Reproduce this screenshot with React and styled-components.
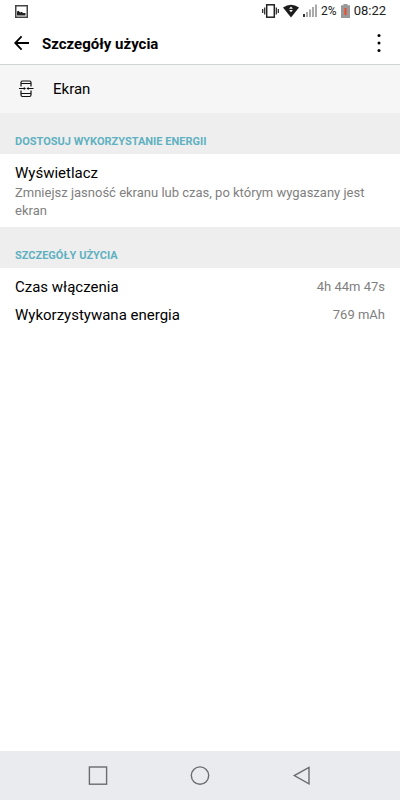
import React from "react";
import styled, { createGlobalStyle } from "styled-components";

const GlobalStyle = createGlobalStyle`
  * {
    box-sizing: border-box;
  }
  body {
    margin: 0;
    background: #fff;
    color: #000;
    font-family: Roboto, "Liberation Sans", sans-serif;
  }
`;

const Screen = styled.div`
  display: flex;
  flex-direction: column;
  min-height: 100vh;
`;

const StatusBar = styled.div`
  display: flex;
  align-items: center;
  justify-content: space-between;
  height: 22px;
  padding: 0 14px 0 15px;
`;

const StatusGroup = styled.div`
  display: flex;
  align-items: center;
  gap: 4px;
  color: #222;
`;

const StatusText = styled.span`
  font-size: ${(props) => (props.$small ? "12px" : "13px")};
  line-height: 24px;
`;

const Header = styled.header`
  display: flex;
  align-items: center;
  height: 43px;
  padding: 0 15px 0 14px;
  border-bottom: 1px solid #cfd4d4;
`;

const Title = styled.h1`
  flex: 1;
  margin: 0 0 0 12px;
  padding-top: 2px;
  font-size: 15px;
  font-weight: 700;
  line-height: 21px;
`;

const IconButton = styled.button`
  display: flex;
  align-items: center;
  justify-content: center;
  padding: 0;
  border: 0;
  background: none;
`;

const AppRow = styled.div`
  display: flex;
  align-items: center;
  gap: 19px;
  height: 48px;
  padding: 0 18px;
  background: #f6f6f6;
  font-size: 15px;
`;

const SectionTitle = styled.h2`
  margin: 0;
  padding: 21px 15px 4px;
  background: #eee;
  color: #5fb1c1;
  font-size: 11px;
  font-weight: 700;
  line-height: 16px;
  text-transform: uppercase;
`;

const Setting = styled.a`
  display: block;
  padding: 9px 15px 7px;
  color: inherit;
  text-decoration: none;
`;

const Label = styled.div`
  font-size: 15px;
  line-height: 21px;
`;

const Summary = styled.div`
  color: #808080;
  font-size: 13px;
  line-height: 18px;
`;

const Details = styled.dl`
  margin: 0;
  padding: 5px 15px;
`;

const Detail = styled.div`
  display: flex;
  justify-content: space-between;
  line-height: 28px;
`;

const DetailName = styled.dt`
  font-size: 15px;
`;

const DetailValue = styled.dd`
  margin: 0;
  color: #808080;
  font-size: 13px;
`;

const NavBar = styled.nav`
  display: flex;
  align-items: center;
  justify-content: center;
  gap: 82px;
  height: 49px;
  margin-top: auto;
  background: #e9ebee;
`;

const PictureIcon = () => (
  <svg width="13" height="13" viewBox="0 0 13 13">
    <rect x="0.75" y="0.75" width="11.5" height="11.5" fill="#fff" stroke="#444" strokeWidth="1.5" />
    <path d="M2 10.5V6.6l1.6-.8 1.6 1.8 1.4-.9 1.6 1.2h2.3v2.6z" fill="#222" />
  </svg>
);

const VibrateIcon = () => (
  <svg width="17" height="14" viewBox="0 0 17 14" fill="none" stroke="#222">
    <rect x="4.7" y="0.8" width="7.6" height="12.4" strokeWidth="1.5" />
    <path d="M2.7 3.5v7M0.7 5v4M14.3 3.5v7M16.3 5v4" strokeWidth="1.2" />
  </svg>
);

const WifiIcon = () => (
  <svg width="16" height="14" viewBox="0 0 16 14">
    <path d="M0 3.4Q8-2 16 3.4L8 13.4z" fill="#1c1c1c" />
    <path d="M8 2.6l1.9 2.2H6.1zM8 8.2L9.9 6H6.1z" fill="#fff" />
  </svg>
);

const SignalIcon = () => (
  <svg width="14" height="14" viewBox="0 0 14 14">
    <rect x="0" y="10" width="2" height="3" fill="#333" />
    <path d="M3 8h2v5H3zM6 5.5h2V13H6zM9 3h2v10H9zM12 0.5h2V13h-2z" fill="#aaa" />
  </svg>
);

const BatteryIcon = () => (
  <svg width="9" height="14" viewBox="0 0 9 14">
    <path d="M2.5 0h4v1.3H9V14H0V1.3h2.5z" fill="#999" />
    <rect x="3.5" y="4" width="2" height="7" fill="#ef4a2c" />
  </svg>
);

const BackArrowIcon = () => (
  <svg width="16" height="16" viewBox="0 0 16 16" fill="none" stroke="#000" strokeWidth="1.8">
    <path d="M15 8H1.4M7.6 1.4L1.2 8l6.4 6.6" />
  </svg>
);

const MenuIcon = () => (
  <svg width="12" height="20" viewBox="0 0 12 20" fill="#000">
    <circle cx="6" cy="2.5" r="1.5" />
    <circle cx="6" cy="10" r="1.5" />
    <circle cx="6" cy="17.5" r="1.5" />
  </svg>
);

const ScreenIcon = () => (
  <svg width="16" height="18" viewBox="0 0 16 18" fill="none" stroke="#111" strokeWidth="1.2">
    <path d="M3 6.5V2.5Q3 1 4.5 1h7Q13 1 13 2.5v4M3 10.5v4.5q0 1.5 1.5 1.5h7q1.5 0 1.5-1.5v-4.5" />
    <path d="M3 3.5h10M3 13.5h10" />
    <path d="M1 8.5h6M9.4 8.5h6.1" />
    <path d="M5.8 7L8 8.5 5.8 10zM10.6 7L8.4 8.5l2.2 1.5z" fill="#111" stroke="none" />
  </svg>
);

const NavIcon = ({ children }) => (
  <svg width="20" height="20" viewBox="0 0 20 20" fill="none" stroke="#6b6c6e" strokeWidth="1.4">
    {children}
  </svg>
);

const details = [
  { name: "Czas włączenia", value: "4h 44m 47s" },
  { name: "Wykorzystywana energia", value: "769 mAh" },
];

const App = () => {
  return (
    <Screen>
      <GlobalStyle />
      <StatusBar>
        <PictureIcon />
        <StatusGroup>
          <VibrateIcon />
          <WifiIcon />
          <SignalIcon />
          <StatusText $small>2%</StatusText>
          <BatteryIcon />
          <StatusText>08:22</StatusText>
        </StatusGroup>
      </StatusBar>
      <Header>
        <IconButton type="button" aria-label="Wstecz">
          <BackArrowIcon />
        </IconButton>
        <Title>Szczegóły użycia</Title>
        <IconButton type="button" aria-label="Menu">
          <MenuIcon />
        </IconButton>
      </Header>
      <main>
        <AppRow>
          <ScreenIcon />
          <span>Ekran</span>
        </AppRow>
        <SectionTitle>Dostosuj wykorzystanie energii</SectionTitle>
        <Setting href="#display">
          <Label>Wyświetlacz</Label>
          <Summary>
            Zmniejsz jasność ekranu lub czas, po którym wygaszany jest ekran
          </Summary>
        </Setting>
        <SectionTitle>Szczegóły użycia</SectionTitle>
        <Details>
          {details.map((detail) => (
            <Detail key={detail.name}>
              <DetailName>{detail.name}</DetailName>
              <DetailValue>{detail.value}</DetailValue>
            </Detail>
          ))}
        </Details>
      </main>
      <NavBar>
        <IconButton type="button" aria-label="Ostatnie">
          <NavIcon>
            <rect x="1.4" y="1" width="17.2" height="17.2" />
          </NavIcon>
        </IconButton>
        <IconButton type="button" aria-label="Ekran główny">
          <NavIcon>
            <circle cx="10" cy="9.6" r="8.7" />
          </NavIcon>
        </IconButton>
        <IconButton type="button" aria-label="Wróć">
          <NavIcon>
            <path d="M17 1.4v16.4L2.3 9.6z" />
          </NavIcon>
        </IconButton>
      </NavBar>
    </Screen>
  );
};

export default App;
